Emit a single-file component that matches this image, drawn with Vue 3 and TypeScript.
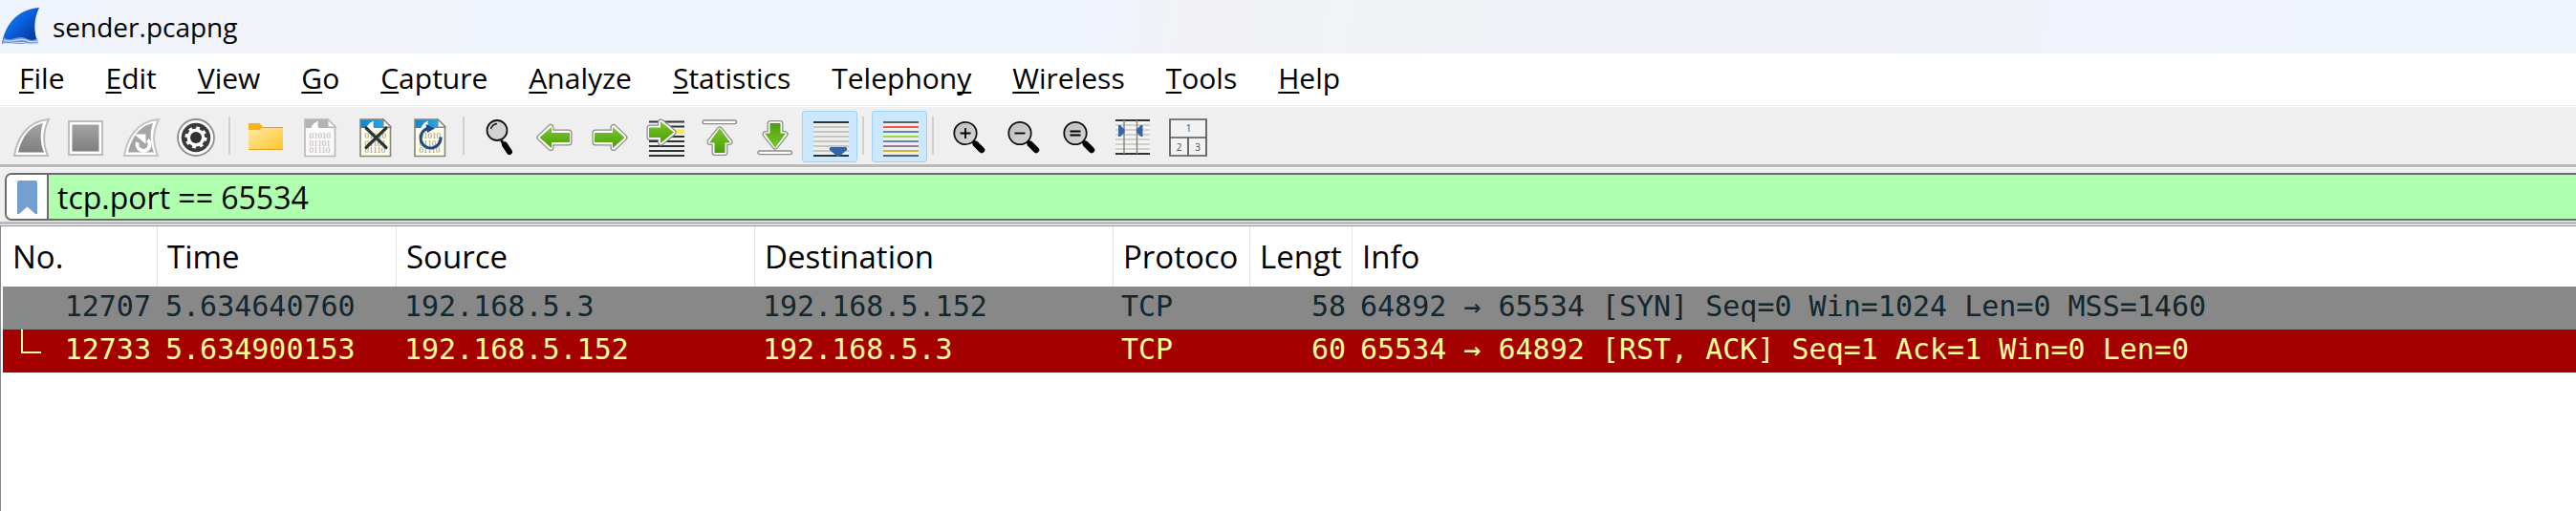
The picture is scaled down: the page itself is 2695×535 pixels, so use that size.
<script setup lang="ts">
import { ref } from 'vue'

interface MenuItem {
  before: string
  key: string
  after: string
}

interface Packet {
  no: number
  time: string
  source: string
  destination: string
  protocol: string
  length: number
  info: string
  tone: 'syn' | 'rst'
}

const filter = ref('tcp.port == 65534')
const autoScroll = ref(true)
const colorize = ref(true)

const menu: MenuItem[] = [
  { before: '', key: 'F', after: 'ile' },
  { before: '', key: 'E', after: 'dit' },
  { before: '', key: 'V', after: 'iew' },
  { before: '', key: 'G', after: 'o' },
  { before: '', key: 'C', after: 'apture' },
  { before: '', key: 'A', after: 'nalyze' },
  { before: '', key: 'S', after: 'tatistics' },
  { before: 'Telephon', key: 'y', after: '' },
  { before: '', key: 'W', after: 'ireless' },
  { before: '', key: 'T', after: 'ools' },
  { before: '', key: 'H', after: 'elp' },
]

const packets: Packet[] = [
  {
    no: 12707,
    time: '5.634640760',
    source: '192.168.5.3',
    destination: '192.168.5.152',
    protocol: 'TCP',
    length: 58,
    info: '64892 → 65534 [SYN] Seq=0 Win=1024 Len=0 MSS=1460',
    tone: 'syn',
  },
  {
    no: 12733,
    time: '5.634900153',
    source: '192.168.5.152',
    destination: '192.168.5.3',
    protocol: 'TCP',
    length: 60,
    info: '65534 → 64892 [RST, ACK] Seq=1 Ack=1 Win=0 Len=0',
    tone: 'rst',
  },
]

const lineRows = [10, 15, 20, 25, 30, 35]
const ruleColors = ['#2e3436', '#ef2929', '#3465a4', '#73d216', '#3465a4', '#75507b', '#c4a000', '#2e3436']
</script>

<template>
  <div class="window">
    <header class="titlebar">
      <svg class="logo" viewBox="0 0 40 40" aria-hidden="true">
        <defs>
          <linearGradient id="logoBlue" x1="0" y1="0" x2="1" y2="1">
            <stop offset="0" stop-color="#2a8cf0" />
            <stop offset=".45" stop-color="#0a62dc" />
            <stop offset="1" stop-color="#062a8c" />
          </linearGradient>
          <linearGradient id="greyFill" x1="0" y1="0" x2="0" y2="1">
            <stop offset="0" stop-color="#a3a3a3" />
            <stop offset="1" stop-color="#7f7f7f" />
          </linearGradient>
          <linearGradient id="greenFill" x1="0" y1="0" x2="0" y2="1">
            <stop offset="0" stop-color="#7cc62e" />
            <stop offset="1" stop-color="#4a9f08" />
          </linearGradient>
          <linearGradient id="folderFill" x1="0" y1="0" x2="1" y2="1">
            <stop offset="0" stop-color="#ffeaa6" />
            <stop offset="1" stop-color="#ffc62b" />
          </linearGradient>
          <linearGradient id="skyFill" x1="0" y1="0" x2="1" y2="0">
            <stop offset="0" stop-color="#1583c7" />
            <stop offset="1" stop-color="#2fb0ee" />
          </linearGradient>
          <linearGradient id="lensFill" x1="0" y1="0" x2="1" y2="1">
            <stop offset="0" stop-color="#bdbdbd" />
            <stop offset="1" stop-color="#d6d6d6" />
          </linearGradient>
          <g id="arrowLeft">
            <path d="M6 21 17 10.500V16H36V26H17V31.500Z" fill="#8b8d88" stroke="#8b8d88" stroke-width="7" stroke-linejoin="round" />
            <path d="M6 21 17 10.500V16H36V26H17V31.500Z" fill="#fff" stroke="#fff" stroke-width="4.500" stroke-linejoin="round" />
            <path d="M5.500 21 18 10V16H37V26H18V32Z" fill="url(#greenFill)" />
          </g>
          <g id="arrowUp">
            <path d="M21 13 31 25.500H26V36.500H16V25.500H11Z" fill="#8b8d88" stroke="#8b8d88" stroke-width="7" stroke-linejoin="round" />
            <path d="M21 13 31 25.500H26V36.500H16V25.500H11Z" fill="#fff" stroke="#fff" stroke-width="4.500" stroke-linejoin="round" />
            <path d="M21 11 32 26.500H26.500V37H15.500V26.500H10Z" fill="url(#greenFill)" />
          </g>
          <g id="digits" font-family="Liberation Serif, serif" font-size="9">
            <text x="9.500" y="22">01010</text>
            <text x="9.500" y="29.500">01101</text>
            <text x="9.500" y="37">01110</text>
          </g>
          <g id="captureFile">
            <path d="M5 2H29L37 10V41H5Z" fill="#fffee8" />
            <path d="M5 2H29L37 10V11H5Z" fill="url(#skyFill)" />
            <path d="M11 13C12 8 15 5 19 3.500 18 7 18.500 10 20 13Z" fill="#fff" />
            <path d="M5 2H29L36.500 9.500V40.500H5Z" fill="none" stroke="#85877f" stroke-width="1.600" />
            <path d="M29 2V10H37Z" fill="#fff" stroke="#85877f" stroke-width="1.200" />
            <use href="#digits" fill="#8e8e88" />
          </g>
          <g id="lens">
            <path d="M25 25 27 27" stroke="#000" stroke-width="4" />
            <path d="M28 28 34 34" stroke="#000" stroke-width="6.500" stroke-linecap="round" />
            <circle cx="17" cy="16.500" r="11.700" fill="url(#lensFill)" stroke="#111" stroke-width="1.800" />
          </g>
        </defs>
        <path d="M0 38C3 20 14 2 39 0 33 13 33 25 38 38Z" fill="url(#logoBlue)" />
        <path d="M2 31C9 37 17 28 25 32 30 35 34 34 37 32L38 38H0Z" fill="#6b96dd" />
        <path d="M2 34C10 38 17 31 25 34 30 37 34 36 38 35M1 37C9 39 17 35 24 37 30 39 34 38 38 37" fill="none" stroke="#d4e2f8" stroke-width="1.200" />
      </svg>
      <span>sender.pcapng</span>
    </header>

    <nav class="menubar" aria-label="Main menu">
      <button v-for="item in menu" :key="item.key" type="button">{{ item.before }}<u>{{ item.key }}</u>{{ item.after }}</button>
    </nav>

    <div class="toolbar" role="toolbar" aria-label="Main toolbar">
      <div class="group four">
        <button type="button" aria-label="Start capture">
          <svg viewBox="0 0 42 42">
            <path d="M3 40C6 22 16 4 39 2 33 14 33 28 38 40Z" fill="#fff" stroke="#bdbdbd" stroke-width="2" />
            <path d="M7 36.500C10 24 17 9 33 6 29.500 16 30 27 34 36.500Z" fill="url(#greyFill)" />
          </svg>
        </button>
        <button type="button" aria-label="Stop capture">
          <svg viewBox="0 0 42 42">
            <rect x="3" y="4" width="35" height="35" fill="#fff" stroke="#bdbdbd" stroke-width="2" />
            <rect x="6.500" y="7.500" width="28" height="28" fill="url(#greyFill)" />
          </svg>
        </button>
        <button type="button" aria-label="Restart capture">
          <svg viewBox="0 0 42 42">
            <path d="M3 40C6 22 16 4 39 2 33 14 33 28 38 40Z" fill="#fff" stroke="#c4c4c4" stroke-width="2" />
            <path d="M7 36.500C10 24 17 9 33 6 29.500 16 30 27 34 36.500Z" fill="#a5a5a5" />
            <path d="M27.500 23.500A6.500 6.500 0 1 1 17 26" fill="none" stroke="#fff" stroke-width="4" />
            <path d="M13.500 17.500H25.500V28Z" fill="#fff" />
          </svg>
        </button>
        <button type="button" aria-label="Capture options">
          <svg viewBox="0 0 42 42">
            <circle cx="21" cy="21" r="19" fill="#fff" stroke="#8e8e8e" stroke-width="1.800" />
            <circle cx="21" cy="21" r="15.200" fill="#3a3a3a" />
            <circle cx="21" cy="21" r="9.400" fill="#fff" />
            <circle cx="21" cy="21" r="10" fill="none" stroke="#fff" stroke-width="3.200" stroke-dasharray="3.600 4.254" />
            <circle cx="21" cy="21" r="6" fill="#303030" />
          </svg>
        </button>
      </div>
      <span class="divider"></span>
      <div class="group four">
        <button type="button" aria-label="Open">
          <svg viewBox="0 0 42 42">
            <path d="M3 7Q3 6 4 6H14L18 9.500V14H3Z" fill="#f9b21a" />
            <path d="M3 13H14.500L18 10H39V33Q39 34 38 34H4Q3 34 3 33Z" fill="url(#folderFill)" />
            <path d="M18 10.500H39M3.500 33.500H38.500" stroke="#e6a01c" />
          </svg>
        </button>
        <button type="button" aria-label="Save">
          <svg viewBox="0 0 42 42">
            <path d="M5 2H29L37 10V41H5Z" fill="#fafafa" />
            <path d="M5 2H29L37 10V11H5Z" fill="#b3b3b3" />
            <path d="M11 13C12 8 15 5 19 3.500 18 7 18.500 10 20 13Z" fill="#fff" />
            <path d="M5 2H29L36.500 9.500V40.500H5Z" fill="none" stroke="#b8b8b8" stroke-width="1.600" />
            <path d="M29 2V10H37Z" fill="#fff" stroke="#b8b8b8" stroke-width="1.200" />
            <use href="#digits" fill="#b0b0b0" />
          </svg>
        </button>
        <button type="button" aria-label="Close file">
          <svg viewBox="0 0 42 42">
            <use href="#captureFile" />
            <path d="M11 11 32 31.500M32 11 11 31.500" stroke="#2e3436" stroke-width="3.200" stroke-linecap="round" />
          </svg>
        </button>
        <button type="button" aria-label="Reload file">
          <svg viewBox="0 0 42 42">
            <use href="#captureFile" />
            <path d="M32 20.500A10.500 10.500 0 1 1 18.500 11.500" fill="none" stroke="#204a87" stroke-width="3" />
            <path d="M16.500 7 26 11.500 18 16Z" fill="#204a87" />
          </svg>
        </button>
      </div>
      <span class="divider"></span>
      <div class="group seven">
        <button type="button" aria-label="Find packet">
          <svg viewBox="0 0 42 42">
            <path d="M22.500 24 25 28" stroke="#000" stroke-width="3" />
            <path d="M26 28.500 31 36" stroke="#000" stroke-width="6" stroke-linecap="round" />
            <circle cx="18" cy="13.500" r="10.500" fill="#d2d2d2" stroke="#111" stroke-width="1.800" />
            <path d="M11.500 12Q13 7 18 6.500" fill="none" stroke="#111" stroke-width="1.400" />
          </svg>
        </button>
        <button type="button" aria-label="Previous packet">
          <svg viewBox="0 0 42 42"><use href="#arrowLeft" /></svg>
        </button>
        <button type="button" aria-label="Next packet">
          <svg viewBox="0 0 42 42"><use href="#arrowLeft" transform="matrix(-1 0 0 1 42 0)" /></svg>
        </button>
        <button type="button" aria-label="Go to packet">
          <svg viewBox="0 0 42 42">
            <path d="M4 4.500H41M4 9.500H41M4 20H41M4 25H41M4 30H41M4 35H41M4 40H41" stroke="#2e3436" stroke-width="1.800" />
            <path d="M24 14.800H41" stroke="#fce94f" stroke-width="5" />
            <path d="M5 11H16.500V5L29 15.500 16.500 26V20.500H5Z" fill="#8b8d88" stroke="#8b8d88" stroke-width="7" stroke-linejoin="round" />
            <path d="M5 11H16.500V5L29 15.500 16.500 26V20.500H5Z" fill="#fff" stroke="#fff" stroke-width="4.500" stroke-linejoin="round" />
            <path d="M4 10.500H16V4L30 15.500 16 27V21H4Z" fill="url(#greenFill)" />
          </svg>
        </button>
        <button type="button" aria-label="First packet">
          <svg viewBox="0 0 42 42">
            <use href="#arrowUp" />
            <rect x="3" y="3" width="35.500" height="3.600" rx="1.800" fill="#fff" stroke="#8b8d88" stroke-width="1.400" />
          </svg>
        </button>
        <button type="button" aria-label="Last packet">
          <svg viewBox="0 0 42 42">
            <use href="#arrowUp" transform="matrix(1 0 0 -1 0 43)" />
            <rect x="3" y="35" width="35.500" height="3.600" rx="1.800" fill="#fff" stroke="#8b8d88" stroke-width="1.400" />
          </svg>
        </button>
        <button type="button" aria-label="Auto scroll" :aria-pressed="autoScroll" :class="{ active: autoScroll }" @click="autoScroll = !autoScroll">
          <svg viewBox="0 0 42 42">
            <rect x="4" y="5" width="37" height="35" fill="#eeeeec" />
            <path v-for="y in lineRows" :key="y" :d="`M4 ${y}H41`" stroke="#c3c5bf" stroke-width="1.800" />
            <path d="M4 5H41M4 40H41" stroke="#2e3436" stroke-width="1.800" />
            <path d="M21 34Q20 31 23 31H37Q40 31 39 34L32 40Q30 42 28 40Z" fill="#3465a4" />
          </svg>
        </button>
      </div>
      <span class="divider"></span>
      <div class="group one">
        <button type="button" aria-label="Colorize" :aria-pressed="colorize" :class="{ active: colorize }" @click="colorize = !colorize">
          <svg viewBox="0 0 42 42">
            <rect x="4" y="5" width="37" height="35" fill="#eeeeec" />
            <path v-for="(color, i) in ruleColors" :key="i" :d="`M4 ${5 + i * 5}H41`" :stroke="color" stroke-width="1.600" />
          </svg>
        </button>
      </div>
      <span class="divider"></span>
      <div class="group five">
        <button type="button" aria-label="Zoom in">
          <svg viewBox="0 0 42 42"><use href="#lens" /><path d="M11.500 16.500H22.500M17 11V22" stroke="#000" stroke-width="1.800" /></svg>
        </button>
        <button type="button" aria-label="Zoom out">
          <svg viewBox="0 0 42 42"><use href="#lens" /><path d="M11.500 16.500H22.500" stroke="#000" stroke-width="1.800" /></svg>
        </button>
        <button type="button" aria-label="Normal size">
          <svg viewBox="0 0 42 42"><use href="#lens" /><path d="M11.500 14.500H22.500M11.500 18.500H22.500" stroke="#000" stroke-width="1.800" /></svg>
        </button>
        <button type="button" aria-label="Resize columns">
          <svg viewBox="0 0 42 42">
            <rect x="2" y="3" width="36" height="35" fill="#f4f4f2" />
            <path d="M2 8H38M2 13H38M2 18H38M2 23H38M2 28H38M2 33H38" stroke="#c3c5bf" stroke-width="1.600" />
            <path d="M2 3H38M2 38H38" stroke="#2e3436" stroke-width="1.800" />
            <path d="M11 3V38M24.500 3V38" stroke="#888a85" stroke-width="1.500" />
            <path d="M5 8H7L11.500 12.500V15.500L7 20H5ZM30.500 8H28.500L24 12.500V15.500L28.500 20H30.500Z" fill="#3465a4" />
          </svg>
        </button>
        <button type="button" aria-label="Layout">
          <svg viewBox="0 0 42 42">
            <path d="M2 2H40V40H2ZM2 21H40M21 21V40" fill="#f2f2f2" stroke="#555753" stroke-width="1.700" />
            <g font-family="Noto Sans, sans-serif" font-size="10" fill="#555753" text-anchor="middle">
              <text x="21.500" y="15">1</text>
              <text x="11.500" y="34.500">2</text>
              <text x="31" y="34.500">3</text>
            </g>
          </svg>
        </button>
      </div>
    </div>

    <form class="filterbar" @submit.prevent>
      <div class="filterbox">
        <button type="button" class="bookmark" aria-label="Filter bookmarks">
          <svg viewBox="0 0 21 35"><path d="M0 2Q0 0 2 0H19Q21 0 21 2V35H19L10.500 27.500 2 35H0Z" fill="#759fd0" /></svg>
        </button>
        <input v-model="filter" type="text" aria-label="Display filter" spellcheck="false" />
      </div>
    </form>

    <main class="packets">
      <table>
        <colgroup>
          <col class="c-no" />
          <col class="c-time" />
          <col class="c-addr" />
          <col class="c-addr" />
          <col class="c-proto" />
          <col class="c-len" />
          <col />
        </colgroup>
        <thead>
          <tr>
            <th>No.</th>
            <th>Time</th>
            <th>Source</th>
            <th>Destination</th>
            <th>Protoco</th>
            <th>Lengt</th>
            <th>Info</th>
          </tr>
        </thead>
        <tbody>
          <tr v-for="packet in packets" :key="packet.no" :class="packet.tone">
            <td>
              <div class="number">
                <svg viewBox="0 0 21 45" aria-hidden="true">
                  <path :d="packet.tone === 'syn' ? 'M21 24H1V45' : 'M1 0V24H21'" fill="none" />
                </svg>
                <span>{{ packet.no }}</span>
              </div>
            </td>
            <td>{{ packet.time }}</td>
            <td>{{ packet.source }}</td>
            <td>{{ packet.destination }}</td>
            <td>{{ packet.protocol }}</td>
            <td class="right">{{ packet.length }}</td>
            <td>{{ packet.info }}</td>
          </tr>
        </tbody>
      </table>
    </main>
  </div>
</template>

<style>
body {
  margin: 0;
  background: #fff;
}
</style>

<style scoped>
.window {
  display: flex;
  flex-direction: column;
  min-height: 100vh;
  overflow: hidden;
  color: #000;
  font-family: "Segoe UI", "Open Sans", "Noto Sans", sans-serif;
}

button {
  margin: 0;
  padding: 0;
  border: 0;
  background: none;
  color: inherit;
  font: inherit;
}

svg {
  display: block;
  flex: none;
}

.titlebar {
  display: flex;
  align-items: center;
  gap: 13px;
  height: 56px;
  padding-left: 2px;
  background: linear-gradient(100deg, #eff3fc 0%, #f2f3f8 14%, #eff3fc 20%, #eff3fc 42%, #f2f2f6 46%, #f0f2f8 70%, #eff3fc 90%);
  font-size: 28px;
}

.logo {
  width: 40px;
  height: 40px;
}

.menubar {
  display: flex;
  align-items: flex-start;
  gap: 43px;
  height: 54px;
  padding-left: 20px;
  border-bottom: 1px solid #eee;
  font-size: 30px;
  line-height: 52px;
}

.menubar u {
  text-decoration-thickness: 2px;
  text-underline-offset: 3px;
  text-decoration-skip-ink: none;
}

.toolbar {
  display: flex;
  align-items: flex-start;
  height: 56px;
  margin-top: 1px;
  padding: 4px 0 0 4px;
  border-bottom: 3px solid #b9b9b9;
  background: #efefef;
}

.group {
  display: flex;
}

.four {
  width: 230px;
}

.seven {
  width: 403px;
}

.one {
  width: 58px;
}

.five {
  width: 287px;
}

.group button {
  display: flex;
  flex: 1;
  justify-content: center;
  box-sizing: border-box;
  height: 54px;
  padding-top: 6px;
  border: 1px solid transparent;
  border-radius: 3px;
}

.group button.active {
  border-color: #99d1ff;
  background: #cce8ff;
}

.group svg {
  width: 42px;
  height: 42px;
}

.divider {
  width: 2px;
  height: 40px;
  margin: 6px 8px 0 5px;
  background: #d0d0d0;
}

.filterbar {
  padding: 5px 0 1px 5px;
  border-top: 1px solid #fff;
  border-bottom: 3px solid #bdbabd;
  background: #efefef;
}

.filterbox {
  display: flex;
  height: 46px;
  overflow: hidden;
  border: 2px solid #6b6b6b;
  border-right: 0;
  border-radius: 7px 0 0 7px;
  background: #afffaf;
}

.bookmark {
  display: flex;
  align-items: center;
  justify-content: center;
  width: 44px;
  border-right: 2px solid #6b6b6b;
  background: #fff;
}

.bookmark svg {
  width: 21px;
  height: 35px;
}

.filterbox input {
  flex: 1;
  min-width: 0;
  padding: 0 0 0 9px;
  border: 0;
  outline: 0;
  background: #afffaf;
  color: #000;
  font: inherit;
  font-size: 32px;
}

.packets {
  flex: 1;
  margin-top: 1px;
  padding-left: 2px;
  border-top: 1px solid #828790;
  border-left: 1px solid #828790;
  background: #fff;
}

table {
  width: 100%;
  border-collapse: separate;
  border-spacing: 0;
  table-layout: fixed;
}

.c-no {
  width: 162px;
}

.c-time {
  width: 250px;
}

.c-addr {
  width: 375px;
}

.c-proto {
  width: 143px;
}

.c-len {
  width: 107px;
}

th,
td {
  overflow: hidden;
  text-align: left;
  white-space: nowrap;
}

th {
  height: 63px;
  padding: 0 0 0 10px;
  border-right: 1px solid #e3e3e3;
  font-size: 33px;
  font-weight: 400;
  line-height: 63px;
}

th:last-child {
  border-right: 0;
}

td {
  height: 45px;
  padding: 0 7px 0 8px;
  font-family: Consolas, "DejaVu Sans Mono", monospace;
  font-size: 30px;
  line-height: 41px;
  vertical-align: top;
}

.right {
  text-align: right;
}

.number {
  display: flex;
  justify-content: space-between;
  height: 45px;
  padding-left: 11px;
}

.number svg {
  width: 21px;
  height: 45px;
  stroke-width: 2px;
}

.syn {
  background: #888;
  color: #12272e;
}

.syn svg {
  stroke: #808b92;
}

.rst {
  background: #a40000;
  color: #fffc9c;
}

.rst svg {
  stroke: #fffc9c;
}
</style>
